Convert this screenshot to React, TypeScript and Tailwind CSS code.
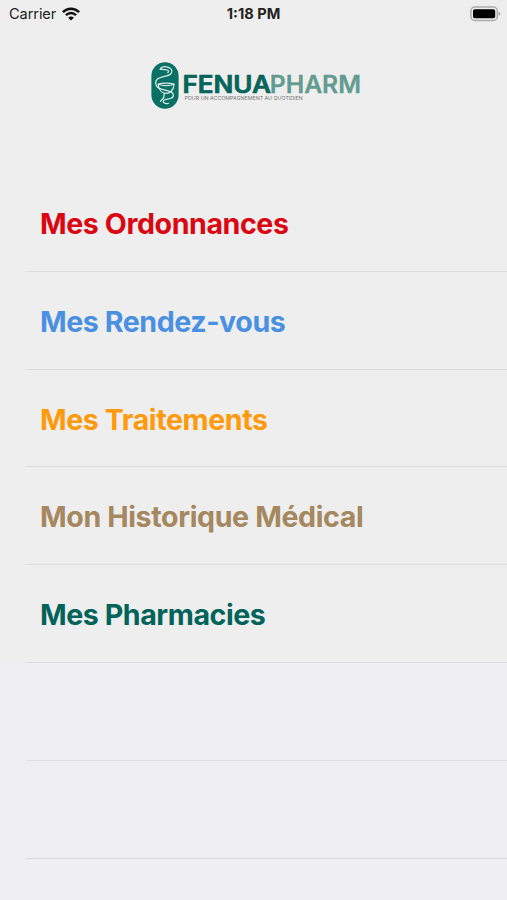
type Item = { label: string; color: string; height: string; tracking: string };

const items: Item[] = [
  { label: "Mes Ordonnances", color: "text-[#dc0612]", height: "h-[98px]", tracking: "tracking-[-0.42px]" },
  { label: "Mes Rendez-vous", color: "text-[#4a90e2]", height: "h-[98px]", tracking: "tracking-[-0.44px]" },
  { label: "Mes Traitements", color: "text-[#ff9a0c]", height: "h-[97px]", tracking: "tracking-[-0.42px]" },
  { label: "Mon Historique Médical", color: "text-[#a58760]", height: "h-[98px]", tracking: "tracking-[-0.38px]" },
  { label: "Mes Pharmacies", color: "text-[#02635a]", height: "h-[98px]", tracking: "tracking-[-0.44px]" },
];

function WifiIcon() {
  return (
    <svg className="ml-[6px] h-[14px] w-[18px]" viewBox="0 0 18 14" fill="none" stroke="#111" strokeWidth="2.5">
      <path d="M0.9 5.1C5.4 0.5 12.6 0.5 17.1 5.1" />
      <path d="M3.9 8.2C6.8 5.3 11.2 5.3 14.1 8.2" />
      <path d="M9 13.6L6.1 10.7C7.7 9.2 10.3 9.2 11.9 10.7Z" fill="#111" stroke="none" />
    </svg>
  );
}

function BatteryIcon() {
  return (
    <svg className="h-[16px] w-[32px]" viewBox="0 0 32 16">
      <rect x="0.9" y="1" width="26.4" height="13.4" rx="4" fill="#eeeeee" stroke="#adadad" strokeWidth="1.5" />
      <rect x="3" y="3.2" width="22.2" height="9.1" rx="1.8" fill="#000" />
      <path d="M28.6 5.4Q30.5 6.4 30.5 7.7T28.6 10Z" fill="#aaa" />
    </svg>
  );
}

function Logo() {
  return (
    <svg className="h-[50px] w-[212px]" viewBox="150 60 212 50">
      <rect x="151.4" y="62.3" width="27.2" height="46.4" rx="13.6" fill="#087064" />
      <g fill="none" stroke="#d9ebe6" strokeWidth="1.25" strokeLinecap="round" strokeLinejoin="round">
        <path d="M160.2 69.2C161.5 66.8 165 66.3 168.3 67.3C172 68.5 173 71.6 170.7 74C168 76.7 160.5 76.2 157.2 79.3C155 81.5 155.2 85 157.6 87.2C160.6 89.8 166.7 90.3 170.4 91.7C174.3 93.2 174.4 96.8 171.1 98.2C168.3 99.5 164.4 99 163.4 100.8C162.3 102.6 165.1 104.1 168.4 103.4" />
        <path d="M160.2 69.2L165 69.6C168.2 69.8 169.4 71.1 167.9 72.5" />
        <path d="M158.2 84.2C162 82.8 170.3 82.8 174 84.2C173.6 90.8 169.5 93.4 166.3 93.4C162.2 93.4 158.6 90.5 158.2 84.2Z" />
        <path d="M158.3 84.3C162.4 86.2 170 86.1 173.9 84.3M164.2 93.3L163.8 97.5L160.4 101.4" />
      </g>
      <g fontFamily="Inter, sans-serif" fontWeight="600" fontSize="23.8" strokeWidth="0.7" strokeLinejoin="round">
        <text x="182.4" y="92.8" textLength="88.6" lengthAdjust="spacingAndGlyphs" fill="#07645b" stroke="#07645b">FENUA</text>
        <text x="269.8" y="92.8" textLength="91.2" lengthAdjust="spacingAndGlyphs" fill="#639b90" stroke="#639b90" strokeWidth="0.3">PHARM</text>
      </g>
      <text x="184.4" y="99.9" textLength="118.3" lengthAdjust="spacingAndGlyphs" fill="#777" fontFamily="Inter, sans-serif" fontSize="5.4">
        POUR UN ACCOMPAGNEMENT AU QUOTIDIEN
      </text>
    </svg>
  );
}

export default function App() {
  return (
    <main className="flex h-[900px] w-[507px] flex-col overflow-hidden bg-[#eeeef3] font-['Inter',sans-serif]">
      <header className="h-[174px] bg-[#eeeeee]">
        <div className="grid h-[28px] grid-cols-3 items-center text-[14.6px] leading-[28px] text-[#222]">
          <div className="flex items-center pl-[9px]">
            <span className="tracking-[-0.1px]">Carrier</span>
            <WifiIcon />
          </div>
          <span className="text-center font-bold">1:18 PM</span>
          <div className="flex justify-end pr-[5px]">
            <BatteryIcon />
          </div>
        </div>
        <div className="mt-[32px] pl-[150px]">
          <Logo />
        </div>
      </header>
      <ul>
        {items.map((item) => (
          <li key={item.label} className={`${item.height} bg-[#eeeeee] pl-[26px]`}>
            <div className={`flex h-full items-center border-b border-[#dcdcdd] pl-[14px] pt-[4px] text-[28.6px] font-bold ${item.color} ${item.tracking}`}>
              {item.label}
            </div>
          </li>
        ))}
      </ul>
      <div className="ml-[26px] h-[98px] border-b border-[#dedee2]" />
      <div className="ml-[26px] h-[98px] border-b border-[#d8d8dc]" />
    </main>
  );
}
